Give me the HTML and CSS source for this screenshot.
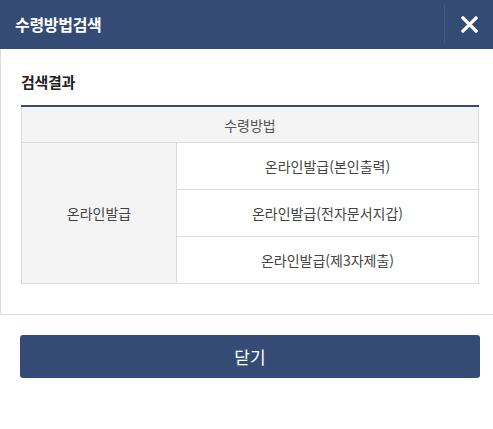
FILE: index.html
```html
<!DOCTYPE html>
<html lang="ko">
<head>
<meta charset="utf-8">
<title>수령방법검색</title>
<link rel="stylesheet" href="styles.css">
</head>
<body>
<div class="popup">
  <div class="popup-head">
    <h1 class="popup-title">수령방법검색</h1>
    <button class="close-btn" type="button" aria-label="닫기">
      <svg width="17" height="17" viewBox="0 0 17 17" aria-hidden="true">
        <path d="M2 2 L15 15 M15 2 L2 15" stroke="#fff" stroke-width="3.2" stroke-linecap="square" fill="none"/>
      </svg>
    </button>
  </div>
  <div class="popup-body">
    <h2 class="section-title">검색결과</h2>
    <table class="result-table">
      <thead>
        <tr><th colspan="2">수령방법</th></tr>
      </thead>
      <tbody>
        <tr>
          <td class="group" rowspan="3">온라인발급</td>
          <td>온라인발급(본인출력)</td>
        </tr>
        <tr><td>온라인발급(전자문서지갑)</td></tr>
        <tr><td>온라인발급(제3자제출)</td></tr>
      </tbody>
    </table>
  </div>
  <div class="popup-foot">
    <button class="btn-close" type="button">닫기</button>
  </div>
</div>
</body>
</html>
```
FILE: styles.css
```css
html, body {
  margin: 0;
  padding: 0;
  background: #fff;
  overflow: hidden;
}
body {
  font-family: "Noto Sans CJK KR", "Noto Sans", sans-serif;
  color: #444;
}
.popup {
  width: 493px;
}
.popup-head {
  display: flex;
  align-items: stretch;
  height: 49px;
  background: #344b76;
}
.popup-title {
  flex: 1;
  margin: 0;
  padding-left: 15px;
  font-size: 16px;
  font-weight: 700;
  line-height: 49px;
  color: #fff;
  letter-spacing: -0.3px;
}
.close-btn {
  width: 49px;
  margin: 4px 0 5px;
  padding: 0 0 0 1px;
  border: 0;
  border-left: 1px solid #45597f;
  background: transparent;
  display: flex;
  align-items: center;
  justify-content: center;
  cursor: pointer;
}
.popup-body {
  border-left: 1px solid #dcdcdc;
  border-bottom: 1px solid #dcdcdc;
  padding: 22px 14px 30px 20px;
}
.section-title {
  margin: 0 0 12px;
  font-size: 15px;
  font-weight: 700;
  line-height: 22px;
  color: #222;
  letter-spacing: -0.3px;
}
.result-table {
  width: 100%;
  border-collapse: collapse;
  font-size: 14px;
  color: #555;
}
.result-table th {
  height: 35px;
  padding: 0;
  border: 1px solid #dcdcdc;
  border-top: 2px solid #344b76;
  background: #f4f4f4;
  font-weight: 400;
  text-align: center;
}
.result-table td {
  height: 46px;
  padding: 0;
  border: 1px solid #dcdcdc;
  text-align: center;
  color: #444;
}
.result-table td.group {
  width: 154px;
  background: #f4f4f4;
}
.popup-foot {
  padding: 20px 13px 0 20px;
}
.btn-close {
  display: block;
  width: 100%;
  height: 43px;
  border: 0;
  border-radius: 3px;
  background: #344b76;
  color: #fff;
  font-family: "Noto Sans CJK KR", "Noto Sans", sans-serif;
  font-size: 17px;
  cursor: pointer;
}
```
